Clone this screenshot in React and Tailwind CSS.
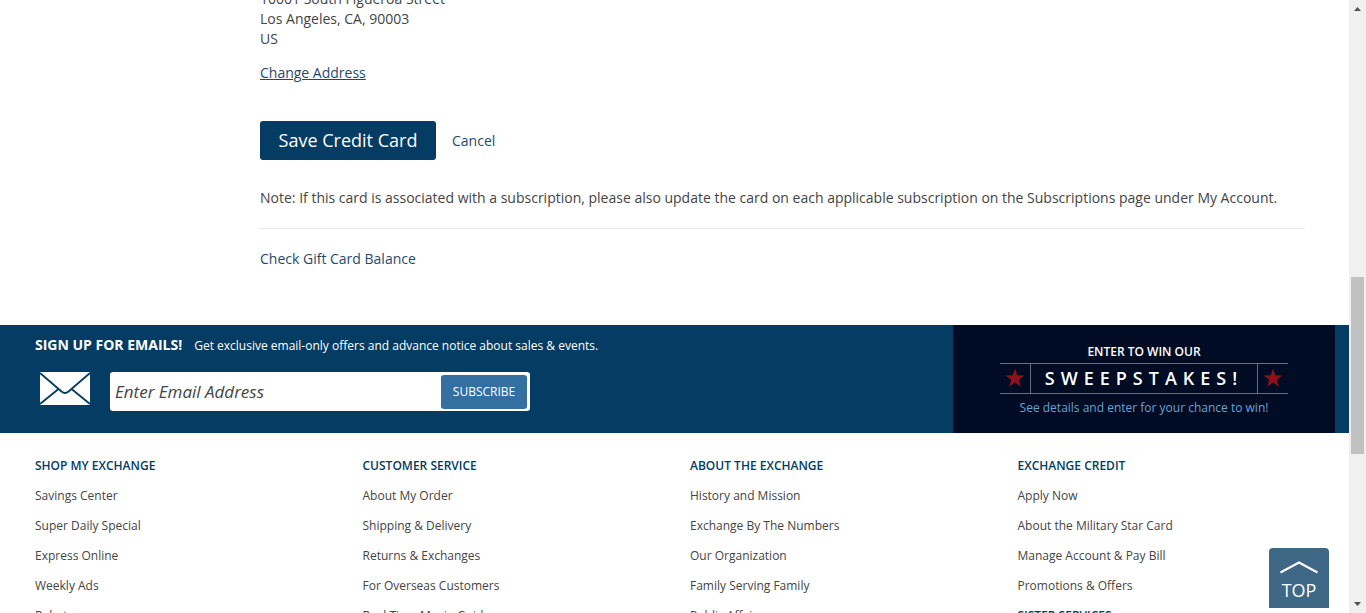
const columns = [
  {
    title: "SHOP MY EXCHANGE",
    links: ["Savings Center", "Super Daily Special", "Express Online", "Weekly Ads", "Rebates"],
  },
  {
    title: "CUSTOMER SERVICE",
    links: ["About My Order", "Shipping & Delivery", "Returns & Exchanges", "For Overseas Customers", "Real Time Movie Guide"],
  },
  {
    title: "ABOUT THE EXCHANGE",
    links: ["History and Mission", "Exchange By The Numbers", "Our Organization", "Family Serving Family", "Public Affairs"],
  },
  {
    title: "EXCHANGE CREDIT",
    links: ["Apply Now", "About the Military Star Card", "Manage Account & Pay Bill", "Promotions & Offers"],
    nextTitle: "SISTER SERVICES",
  },
];

function Star() {
  return (
    <svg viewBox="0 0 20 20" className="h-5 w-5" fill="#8f0f1b" aria-hidden="true">
      <path d="M10 .6l2.35 6.7 7.1.2-5.6 4.3 2 6.9L10 14.6l-5.85 4.1 2-6.9L.55 7.5l7.1-.2z" />
    </svg>
  );
}

function Envelope() {
  return (
    <svg viewBox="0 0 50 33" className="h-[33px] w-[50px] shrink-0" aria-hidden="true">
      <rect width="50" height="33" fill="#fff" />
      <path d="M0 1l21.5 18.5q3.5 3 7 0L50 1M0 32l18.5-15M50 32L31.500 17" fill="none" stroke="#043c63" strokeWidth="1.8" />
    </svg>
  );
}

function AccountContent() {
  return (
    <section className="-mt-[11px] pl-[260px] pr-11 pb-14 text-sm leading-5 text-[#444]">
      <address className="not-italic">
        10001 South Figueroa Street
        <br />
        Los Angeles, CA, 90003
        <br />
        US
      </address>
      <a href="#address" className="mt-3.5 inline-block text-[#1f4a6b] underline">Change Address</a>
      <div className="mt-[38px] flex items-center gap-4">
        <button type="button" className="h-[39px] w-44 rounded-[3px] bg-[#043c63] pb-0.5 text-lg text-white">
          Save Credit Card
        </button>
        <a href="#cancel" className="text-[#1f4a6b]">Cancel</a>
      </div>
      <p className="mt-7">
        Note: If this card is associated with a subscription, please also update the card on each applicable subscription on the Subscriptions page under My Account.
      </p>
      <hr className="my-5 border-[#e8e8e8]" />
      <a href="#gift" className="block text-[#1f4a6b]">Check Gift Card Balance</a>
    </section>
  );
}

function EmailBand() {
  return (
    <section className="flex h-[108px] justify-between bg-[#043c63] pl-[35px] pr-3.5 text-white">
      <form className="pt-2.5">
        <div className="flex items-baseline gap-3">
          <label htmlFor="email" className="text-sm font-bold">SIGN UP FOR EMAILS!</label>
          <span className="text-xs">Get exclusive email-only offers and advance notice about sales &amp; events.</span>
        </div>
        <div className="mt-[17px] flex items-start gap-5 pl-[5px]">
          <Envelope />
          <div className="flex h-[39px] w-[420px] items-center rounded-[3px] bg-white pr-[3px]">
            <input
              id="email"
              type="email"
              placeholder="Enter Email Address"
              className="min-w-0 flex-1 px-[5px] text-[17px] text-[#444] italic outline-none placeholder:text-[#444]"
            />
            <button type="button" className="h-[34px] w-[86px] rounded-[3px] bg-[#346fa2] text-xs text-white">SUBSCRIBE</button>
          </div>
        </div>
      </form>
      <a href="#sweepstakes" className="flex w-[382px] flex-col items-center bg-[#000b24] pt-[18px]">
        <span className="text-xs leading-[18px] font-semibold">ENTER TO WIN OUR</span>
        <span className="mt-0.5 flex h-[31px] w-[288px] items-stretch border-y border-[#666d7b]">
          <span className="flex w-[30px] justify-center pt-1"><Star /></span>
          <span className="flex-1 border-x border-[#666d7b] text-center text-lg leading-7 font-semibold tracking-[6px]">SWEEPSTAKES!</span>
          <span className="flex w-[30px] justify-center pt-1"><Star /></span>
        </span>
        <span className="mt-[5px] text-xs leading-[18px] text-[#6ba3d0]">See details and enter for your chance to win!</span>
      </a>
    </section>
  );
}

function FooterLinks() {
  return (
    <footer className="grid grid-cols-4 pt-[18px] pr-1 pl-[35px] text-xs text-[#444]">
      {columns.map((c) => (
        <nav key={c.title} aria-label={c.title}>
          <h2 className="leading-[30px] font-semibold text-[#043c63]">{c.title}</h2>
          <ul>
            {c.links.map((l) => (
              <li key={l} className="leading-[30px]">
                <a href="#link">{l}</a>
              </li>
            ))}
          </ul>
          {c.nextTitle && <h2 className="leading-[30px] font-semibold text-[#043c63]">{c.nextTitle}</h2>}
        </nav>
      ))}
    </footer>
  );
}

function ScrollRail() {
  return (
    <div className="flex w-[17px] shrink-0 flex-col bg-[#f0f0f0]" aria-hidden="true">
      <svg viewBox="0 0 17 17" className="h-[17px] w-[17px]" fill="#505050"><path d="M5 11h7L8.500 7z" /></svg>
      <div className="grow-[260]" />
      <div className="mx-0.5 grow-[177] bg-[#c1c1c1]" />
      <div className="grow-[142]" />
      <svg viewBox="0 0 17 17" className="h-[17px] w-[17px]" fill="#505050"><path d="M5 6h7l-3.500 4z" /></svg>
    </div>
  );
}

export default function App() {
  return (
    <div className="flex h-screen overflow-hidden bg-white font-['Open_Sans','Noto_Sans',sans-serif]">
      <main className="min-w-0 flex-1 overflow-hidden">
        <AccountContent />
        <EmailBand />
        <FooterLinks />
      </main>
      <ScrollRail />
      <button type="button" className="fixed right-[37px] bottom-[5px] flex h-[60px] w-[60px] flex-col items-center rounded-t bg-[#3e6886] pt-3 text-lg leading-6 text-white">
        <svg viewBox="0 0 40 14" className="h-3.5 w-10 shrink-0" fill="none" stroke="#fff" strokeWidth="2" aria-hidden="true">
          <path d="M1.500 12.500L20 2.500l18.500 10" />
        </svg>
        <span className="pt-1">TOP</span>
      </button>
    </div>
  );
}
